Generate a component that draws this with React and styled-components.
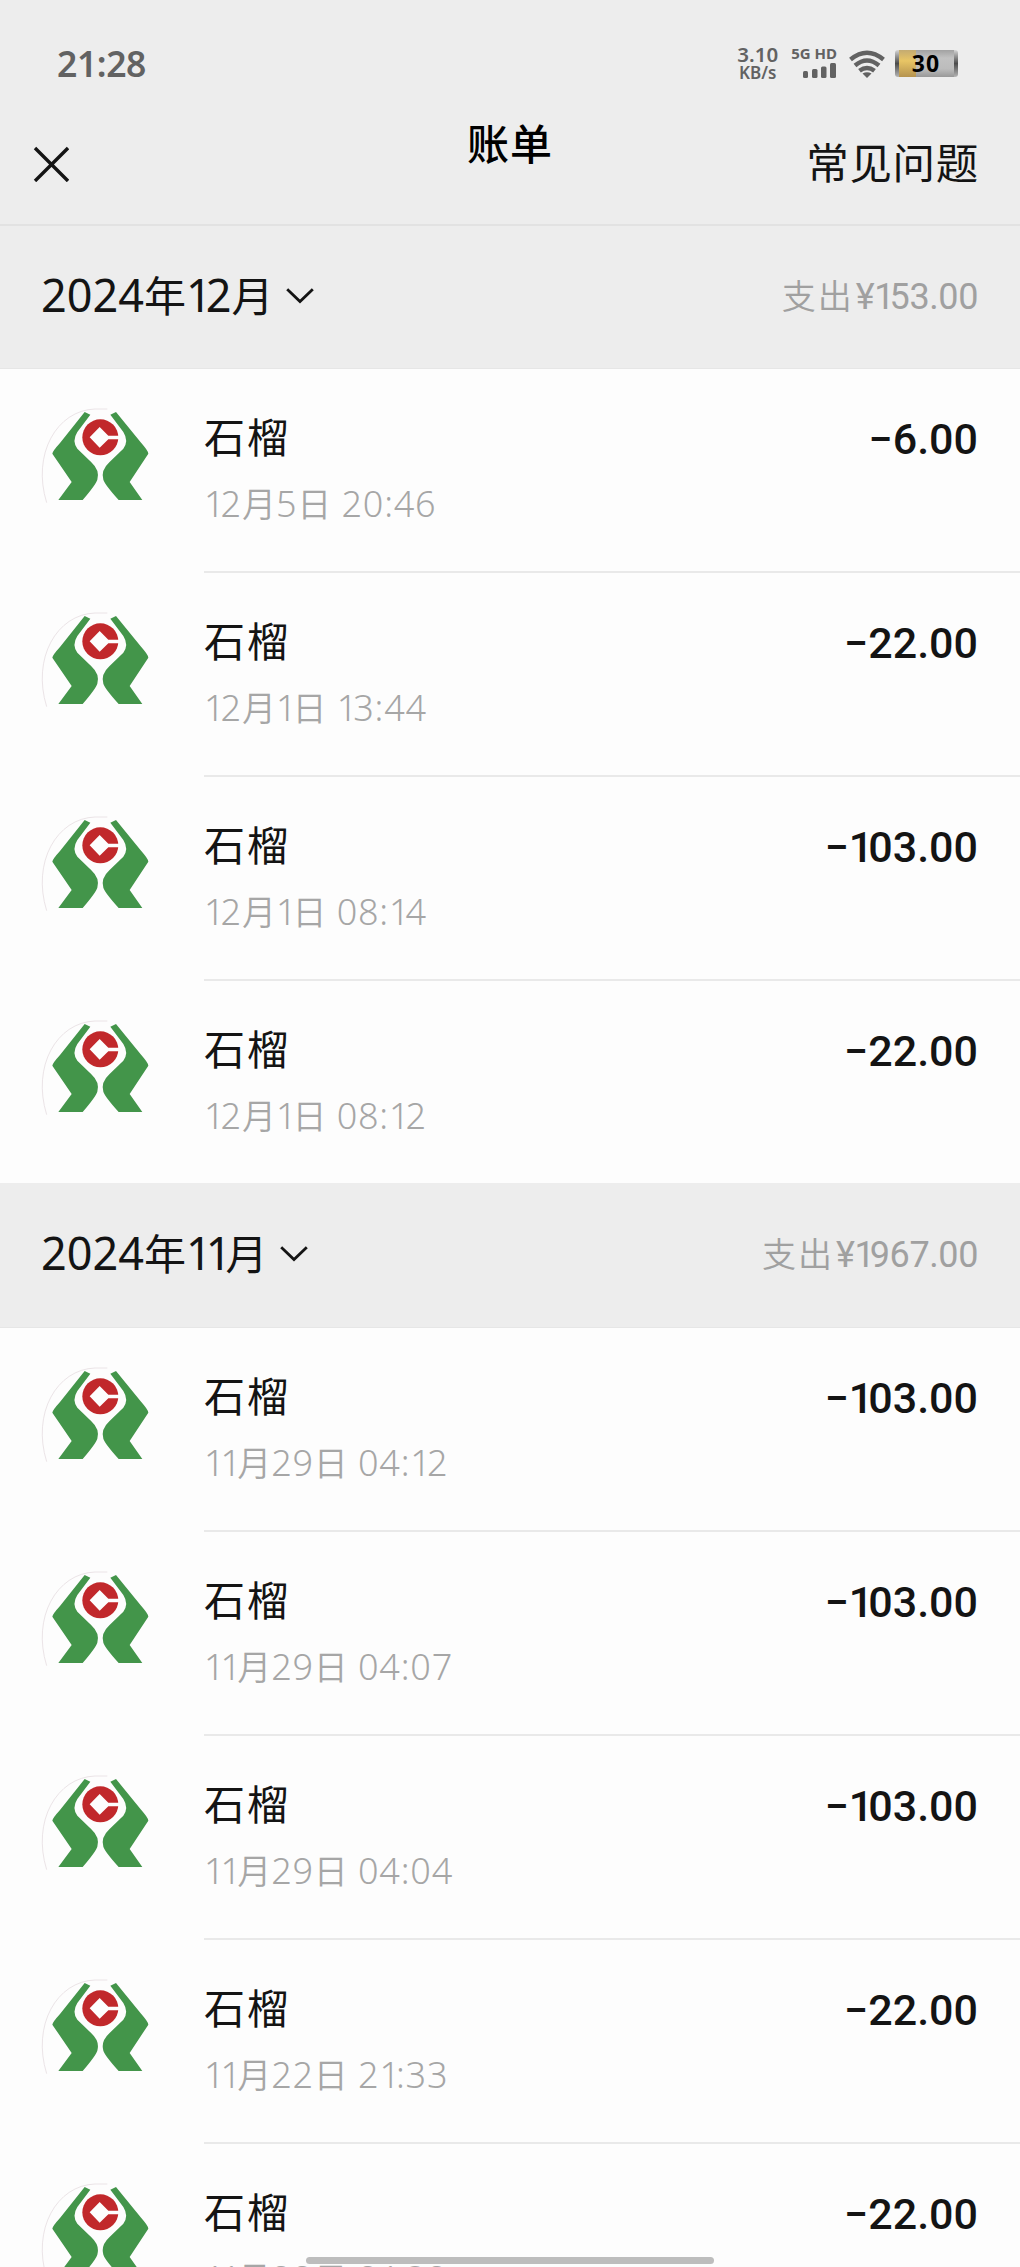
import React from 'react';
import styled, { createGlobalStyle } from 'styled-components';

const GlobalStyle = createGlobalStyle`
  * {
    box-sizing: border-box;
  }

  body {
    margin: 0;
    background: #fdfdfd;
    font-family: 'Noto Sans CJK SC', 'Noto Sans', sans-serif;
    color: #141414;
  }
`;

const Page = styled.div`
  position: relative;
  width: 1020px;
  height: 2267px;
  overflow: hidden;
  background: #fdfdfd;
`;

const Header = styled.header`
  height: 226px;
  background: #ededed;
  border-bottom: 2px solid #e2e2e2;
`;

const StatusBar = styled.div`
  height: 86px;
  padding: 44px 60px 0 57px;
  display: flex;
  justify-content: space-between;
  color: #626262;
`;

const Clock = styled.div`
  font-family: 'Noto Sans', sans-serif;
  font-size: 35.5px;
  font-weight: 600;
  line-height: 38px;
  letter-spacing: -0.4px;
`;

const StatusIcons = styled.div`
  display: flex;
  align-items: flex-start;
`;

const Speed = styled.div`
  margin-right: 13px;
  text-align: center;
  white-space: nowrap;
  font-family: 'Noto Sans', sans-serif;
  font-weight: 600;
  font-size: 20.5px;
  line-height: 21px;
`;

const SpeedUnit = styled.div`
  font-size: 17px;
  line-height: 16px;
`;

const Network = styled.div`
  margin-right: 12px;
  padding-top: 1px;
  white-space: nowrap;
  font-family: 'Noto Sans', sans-serif;
  font-weight: 700;
  font-size: 15px;
  line-height: 16px;

  svg {
    display: block;
    margin: 2px 0 0 auto;
  }
`;

const NavBar = styled.div`
  height: 138px;
  padding: 0 41px 0 33px;
  display: grid;
  grid-template-columns: 1fr auto 1fr;
`;

const CloseButton = styled.button`
  width: 36px;
  height: 36px;
  margin-top: 60px;
  padding: 0;
  border: 0;
  background: none;

  svg {
    display: block;
  }
`;

const Title = styled.h1`
  margin: 32px 0 0 8px;
  font-size: 42px;
  font-weight: 500;
  line-height: 48px;
  letter-spacing: 1px;
  color: #000;
`;

const HelpLink = styled.a`
  justify-self: end;
  margin-top: 51px;
  font-size: 42.5px;
  line-height: 48px;
  letter-spacing: 0.7px;
`;

const MonthBar = styled.div`
  height: ${(p) => p.$height}px;
  padding: 0 42px 3px 41px;
  display: flex;
  align-items: center;
  justify-content: space-between;
  background: #ededed;
  border-bottom: 1px solid #e6e6e6;
`;

const MonthPicker = styled.div`
  display: flex;
  align-items: center;
  font-size: 42px;
  line-height: 60px;

  > span {
    margin-top: -3px;
  }

  svg {
    margin: 1px 0 0 12px;
  }
`;

const Num = styled.span`
  font-family: 'Noto Sans', 'Noto Sans CJK SC', sans-serif;
  font-size: ${(p) => p.$size}px;
  letter-spacing: ${(p) => p.$gap || 0}px;
`;

const One = styled.span`
  letter-spacing: ${(p) => -p.$trim}px;
`;

const Expense = styled.div`
  font-size: 34px;
  font-weight: 350;
  line-height: 48px;
  letter-spacing: 2px;
  color: #a0a0a0;
`;

const Yen = styled.span`
  margin-left: 2px;
  font-family: Roboto, sans-serif;
  font-size: 36px;
  font-weight: 400;
  letter-spacing: -0.4px;
`;

const Row = styled.div`
  height: ${(p) => (p.$last ? 202 : 204)}px;
  padding-left: 40px;
  display: flex;
`;

const Avatar = styled.svg`
  flex: none;
  width: 120px;
  height: 120px;
  margin: 38px 44px 0 0;
`;

const RowBody = styled.div`
  flex: 1;
  padding: 36px 42px 0 0;
  display: flex;
  justify-content: space-between;
  border-bottom: ${(p) => (p.$last ? 'none' : '2px solid #e9e9e9')};
`;

const Name = styled.div`
  font-size: 41px;
  line-height: 60px;
  letter-spacing: 2px;
`;

const Time = styled.div`
  margin-top: 13px;
  font-size: 34px;
  font-weight: 350;
  line-height: 50px;
  white-space: pre;
  color: #a6a6a6;
`;

const Amount = styled.div`
  margin-top: 4px;
  font-family: Roboto, sans-serif;
  font-size: 43px;
  font-weight: 500;
  line-height: 60px;
`;

const HomeIndicator = styled.div`
  position: absolute;
  left: 306px;
  bottom: 3px;
  width: 408px;
  height: 7px;
  border-radius: 4px;
  background: #bdbdbd;
`;

const months = [
  {
    label: '2024年12月',
    total: '153.00',
    height: 143,
    bills: [
      { time: '12月5日 20:46', amount: '6.00' },
      { time: '12月1日 13:44', amount: '22.00' },
      { time: '12月1日 08:14', amount: '103.00' },
      { time: '12月1日 08:12', amount: '22.00' },
    ],
  },
  {
    label: '2024年11月',
    total: '1967.00',
    height: 145,
    bills: [
      { time: '11月29日 04:12', amount: '103.00' },
      { time: '11月29日 04:07', amount: '103.00' },
      { time: '11月29日 04:04', amount: '103.00' },
      { time: '11月22日 21:33', amount: '22.00' },
      { time: '11月22日 21:32', amount: '22.00' },
    ],
  },
];

// the "1" takes less room than the other digits
const Digits = ({ text, trim }) =>
  text.split(/(1)/).map((part, i) =>
    part === '1' ? <One key={i} $trim={trim}>1</One> : part
  );

// digits are set larger than the characters around them
const Mixed = ({ text, size, gap, trim }) =>
  text.split(/([0-9: ]+)/).map((part, i) =>
    /[0-9]/.test(part) ? (
      <Num key={i} $size={size} $gap={gap}>
        <Digits text={part} trim={trim} />
      </Num>
    ) : (
      part
    )
  );

const BankLogo = () => (
  <Avatar viewBox="60 78 360 360">
    <path d="M80 365C35 220 110 88 225 84H262" fill="none" stroke="#ebe4e7" strokeWidth="3" />
    <path
      d="M194 93L211 101L172 153Q155 180 172 203L214 244Q240 268 232 296Q228 310 188 357H115L155 303L97 218Q98 210 120 186Z"
      fill="#43954a"
    />
    <path
      d="M288 93L271 101L310 153Q327 180 310 203L268 244Q242 268 250 296Q254 310 296 357H367L329 303L385 218Q385 210 362 184Z"
      fill="#43954a"
    />
    <circle cx="241" cy="169" r="54" fill="#c1282b" />
    <path d="M239 138L265 164H298V175H265L239 200L209 169Z" fill="#fdfdfd" />
  </Avatar>
);

const Chevron = () => (
  <svg width="28" height="17" viewBox="0 0 28 17" fill="none" stroke="#141414" strokeWidth="2.8">
    <path d="M1.2 1.2L14 13.6L26.8 1.2" />
  </svg>
);

const WifiIcon = styled.svg`
  margin: 6px 9px 0 0;
`;

const Wifi = () => (
  <WifiIcon width="36" height="28" viewBox="0 0 36 28" fill="none" stroke="#626262" strokeWidth="4.4">
    <path d="M1.5 9.5Q18 -4 34.5 9.5" />
    <path d="M6 15.5Q18 5.5 30 15.5" />
    <path d="M10.5 20.8Q18 15 25.5 20.8" />
    <path d="M13.5 23.5Q18 21 22.5 23.5L18 28Z" fill="#626262" stroke="none" />
  </WifiIcon>
);

const BatteryIcon = styled.svg`
  margin-top: 6px;
`;

const Battery = () => (
  <BatteryIcon width="66" height="28" viewBox="0 0 66 28">
    <defs>
      <linearGradient id="shell" x1="0" y1="0" x2="0" y2="1">
        <stop offset="0" stopColor="#d5d5d5" />
        <stop offset="0.5" stopColor="#4c4c4c" />
        <stop offset="1" stopColor="#b5b5b5" />
      </linearGradient>
      <linearGradient id="charge" x1="0" y1="0" x2="0" y2="1">
        <stop offset="0" stopColor="#c4ab72" />
        <stop offset="0.4" stopColor="#e8c565" />
        <stop offset="1" stopColor="#b5934f" />
      </linearGradient>
      <linearGradient id="empty" x1="0" y1="0" x2="0" y2="1">
        <stop offset="0" stopColor="#a2a2a2" />
        <stop offset="0.3" stopColor="#c2c2c2" />
        <stop offset="0.7" stopColor="#bcbcbc" />
        <stop offset="1" stopColor="#989898" />
      </linearGradient>
    </defs>
    <rect x="1" y="0" width="63" height="27" rx="3" fill="url(#shell)" />
    <rect x="5" y="0" width="17" height="27" fill="url(#charge)" />
    <rect x="22" y="0" width="38" height="27" fill="url(#empty)" />
    <text
      x="32"
      y="22"
      textAnchor="middle"
      fontFamily="Noto Sans, sans-serif"
      fontSize="23"
      fontWeight="700"
      letterSpacing="1"
      fill="#000"
    >
      30
    </text>
  </BatteryIcon>
);

const App = () => (
  <Page>
    <GlobalStyle />
    <Header>
      <StatusBar>
        <Clock>21:28</Clock>
        <StatusIcons>
          <Speed>
            3.10
            <SpeedUnit>KB/s</SpeedUnit>
          </Speed>
          <Network>
            5G HD
            <svg width="34" height="16" viewBox="0 0 34 16" fill="#626262">
              <rect x="0" y="8" width="5" height="7" rx="1.5" />
              <rect x="9" y="6" width="5.5" height="9" rx="1.5" />
              <rect x="18" y="3.5" width="5.5" height="11.5" rx="1.5" />
              <rect x="27" y="0" width="6" height="15" rx="1.5" />
            </svg>
          </Network>
          <Wifi />
          <Battery />
        </StatusIcons>
      </StatusBar>
      <NavBar>
        <CloseButton aria-label="关闭">
          <svg width="36" height="36" viewBox="0 0 36 36" stroke="#141414" strokeWidth="3.4">
            <path d="M2 2L35 35M35 2L2 35" />
          </svg>
        </CloseButton>
        <Title>账单</Title>
        <HelpLink>常见问题</HelpLink>
      </NavBar>
    </Header>

    {months.map((month) => (
      <section key={month.label}>
        <MonthBar $height={month.height}>
          <MonthPicker>
            <span>
              <Mixed text={month.label} size={45} trim={6} />
            </span>
            <Chevron />
          </MonthPicker>
          <Expense>
            支出
            <Yen>
              ¥<Digits text={month.total} trim={5} />
            </Yen>
          </Expense>
        </MonthBar>
        {month.bills.map((bill, i) => {
          const last = i === month.bills.length - 1;
          return (
            <Row key={bill.time} $last={last}>
              <BankLogo />
              <RowBody $last={last}>
                <div>
                  <Name>石榴</Name>
                  <Time>
                    <Mixed text={bill.time} size={36} gap={0.8} trim={4} />
                  </Time>
                </div>
                <Amount>
                  −<Digits text={bill.amount} trim={5} />
                </Amount>
              </RowBody>
            </Row>
          );
        })}
      </section>
    ))}
    <HomeIndicator />
  </Page>
);

export default App;
